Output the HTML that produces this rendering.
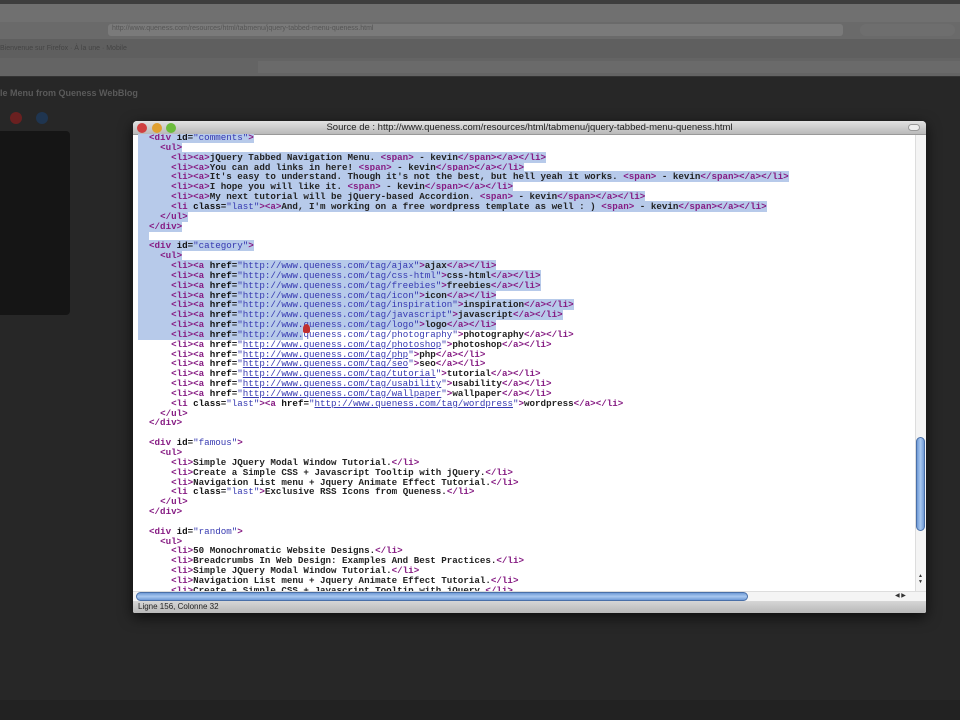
<!DOCTYPE html>
<html><head><meta charset="utf-8"><style>
*{margin:0;padding:0;box-sizing:border-box}
body{width:960px;height:720px;overflow:hidden;background:#272727;font-family:"Liberation Sans",sans-serif;position:relative}
.abs{position:absolute}
.chrome{left:0;top:0;width:960px;height:77px;background:#666}
.win{left:133px;top:121px;width:793px;height:492px;background:#fff;border-radius:4px 4px 2px 2px;box-shadow:0 4px 14px rgba(0,0,0,.7);overflow:hidden}
.title{left:0;top:0;width:793px;height:14px;background:linear-gradient(#e2e2e2,#b9b9b9);font-size:9.5px;color:#222;text-align:center;line-height:14px;border-bottom:1px solid #999}
.dot{top:2px;width:10px;height:10px;border-radius:50%}
.code{left:5px;top:13px;width:778px;height:457px;overflow:hidden}
pre{font-family:"Liberation Mono",monospace;font-size:9.2px;line-height:9.85px;color:#222;font-weight:bold;margin-top:-1px}
.t{color:#861c83}.a{color:#111}.v{color:#3538b0;font-weight:normal}
.u{text-decoration:underline}
.s{background:#b7caea}
</style></head><body>
<div class="abs chrome">
 <div class="abs" style="left:0;top:0;width:960px;height:4px;background:#3e3e3e"></div>
 <div class="abs" style="left:0;top:4px;width:960px;height:18px;background:#707070"></div>
 <div class="abs" style="left:0;top:22px;width:960px;height:17px;background:#6a6a6a"></div>
 <div class="abs" style="left:108px;top:24px;width:735px;height:12px;background:#7a7a7a;border-radius:3px"></div>
 <div class="abs" style="left:112px;top:25px;font-size:7px;color:#555">http://www.queness.com/resources/html/tabmenu/jquery-tabbed-menu-queness.html</div>
 <div class="abs" style="left:860px;top:24px;width:95px;height:12px;background:#6e6e6e;border-radius:6px"></div>
 <div class="abs" style="left:0;top:39px;width:960px;height:19px;background:#5f5f5f"></div>
 <div class="abs" style="left:0;top:45px;font-size:7px;color:#444">Bienvenue sur Firefox · À la une · Mobile</div>
 <div class="abs" style="left:0;top:58px;width:960px;height:18px;background:#646464"></div>
 <div class="abs" style="left:258px;top:61px;width:702px;height:12px;background:#6a6a6a"></div>
 <div class="abs" style="left:0;top:76px;width:960px;height:1px;background:#333"></div>
</div>
<div class="abs" style="left:0;top:88px;font-size:9px;color:#5a5a5a;font-weight:bold">le Menu from Queness WebBlog</div>
<div class="abs" style="left:10px;top:112px;width:12px;height:12px;border-radius:50%;background:#6a2020"></div>
<div class="abs" style="left:36px;top:112px;width:12px;height:12px;border-radius:50%;background:#1f3550"></div>
<div class="abs" style="left:0;top:131px;width:70px;height:184px;background:#151515;border-radius:0 4px 4px 0"></div>
<div class="abs" style="left:0;top:700px;width:960px;height:20px;background:#222"></div>

<div class="abs win">
 <div class="abs title">Source de : http://www.queness.com/resources/html/tabmenu/jquery-tabbed-menu-queness.html</div>
 <div class="abs dot" style="left:4px;background:#d04040"></div>
 <div class="abs dot" style="left:19px;background:#e0a030"></div>
 <div class="abs dot" style="left:33px;background:#6cbc3c"></div>
 <div class="abs" style="right:6px;top:3px;width:12px;height:7px;background:#eee;border-radius:4px;border:1px solid #999"></div>
 <div class="abs code"><pre><span class="s">  <span class="t">&lt;div</span> <span class="a">id</span>=<span class="v">"comments"</span><span class="t">&gt;</span>
    <span class="t">&lt;ul&gt;</span>
      <span class="t">&lt;li&gt;&lt;a&gt;</span>jQuery Tabbed Navigation Menu. <span class="t">&lt;span&gt;</span> - kevin<span class="t">&lt;/span&gt;&lt;/a&gt;&lt;/li&gt;</span>
      <span class="t">&lt;li&gt;&lt;a&gt;</span>You can add links in here! <span class="t">&lt;span&gt;</span> - kevin<span class="t">&lt;/span&gt;&lt;/a&gt;&lt;/li&gt;</span>
      <span class="t">&lt;li&gt;&lt;a&gt;</span>It's easy to understand. Though it's not the best, but hell yeah it works. <span class="t">&lt;span&gt;</span> - kevin<span class="t">&lt;/span&gt;&lt;/a&gt;&lt;/li&gt;</span>
      <span class="t">&lt;li&gt;&lt;a&gt;</span>I hope you will like it. <span class="t">&lt;span&gt;</span> - kevin<span class="t">&lt;/span&gt;&lt;/a&gt;&lt;/li&gt;</span>
      <span class="t">&lt;li&gt;&lt;a&gt;</span>My next tutorial will be jQuery-based Accordion. <span class="t">&lt;span&gt;</span> - kevin<span class="t">&lt;/span&gt;&lt;/a&gt;&lt;/li&gt;</span>
      <span class="t">&lt;li</span> <span class="a">class</span>=<span class="v">"last"</span><span class="t">&gt;&lt;a&gt;</span>And, I'm working on a free wordpress template as well : ) <span class="t">&lt;span&gt;</span> - kevin<span class="t">&lt;/span&gt;&lt;/a&gt;&lt;/li&gt;</span>
    <span class="t">&lt;/ul&gt;</span>
  <span class="t">&lt;/div&gt;</span>
  
  <span class="t">&lt;div</span> <span class="a">id</span>=<span class="v">"category"</span><span class="t">&gt;</span>
    <span class="t">&lt;ul&gt;</span>
      <span class="t">&lt;li&gt;&lt;a</span> <span class="a">href</span>=<span class="v">"http://www.queness.com/tag/ajax"</span><span class="t">&gt;</span>ajax<span class="t">&lt;/a&gt;&lt;/li&gt;</span>
      <span class="t">&lt;li&gt;&lt;a</span> <span class="a">href</span>=<span class="v">"http://www.queness.com/tag/css-html"</span><span class="t">&gt;</span>css-html<span class="t">&lt;/a&gt;&lt;/li&gt;</span>
      <span class="t">&lt;li&gt;&lt;a</span> <span class="a">href</span>=<span class="v">"http://www.queness.com/tag/freebies"</span><span class="t">&gt;</span>freebies<span class="t">&lt;/a&gt;&lt;/li&gt;</span>
      <span class="t">&lt;li&gt;&lt;a</span> <span class="a">href</span>=<span class="v">"http://www.queness.com/tag/icon"</span><span class="t">&gt;</span>icon<span class="t">&lt;/a&gt;&lt;/li&gt;</span>
      <span class="t">&lt;li&gt;&lt;a</span> <span class="a">href</span>=<span class="v">"http://www.queness.com/tag/inspiration"</span><span class="t">&gt;</span>inspiration<span class="t">&lt;/a&gt;&lt;/li&gt;</span>
      <span class="t">&lt;li&gt;&lt;a</span> <span class="a">href</span>=<span class="v">"http://www.queness.com/tag/javascript"</span><span class="t">&gt;</span>javascript<span class="t">&lt;/a&gt;&lt;/li&gt;</span>
      <span class="t">&lt;li&gt;&lt;a</span> <span class="a">href</span>=<span class="v">"http://www.queness.com/tag/logo"</span><span class="t">&gt;</span>logo<span class="t">&lt;/a&gt;&lt;/li&gt;</span>
      <span class="t">&lt;li&gt;&lt;a</span> <span class="a">href</span>=<span class="v">"http://www.</span></span><span class="v">queness.com/tag/photography"</span><span class="t">&gt;</span>photography<span class="t">&lt;/a&gt;&lt;/li&gt;</span>
      <span class="t">&lt;li&gt;&lt;a</span> <span class="a">href</span>=<span class="v">"<span class="u">http://www.queness.com/tag/photoshop</span>"</span><span class="t">&gt;</span>photoshop<span class="t">&lt;/a&gt;&lt;/li&gt;</span>
      <span class="t">&lt;li&gt;&lt;a</span> <span class="a">href</span>=<span class="v">"<span class="u">http://www.queness.com/tag/php</span>"</span><span class="t">&gt;</span>php<span class="t">&lt;/a&gt;&lt;/li&gt;</span>
      <span class="t">&lt;li&gt;&lt;a</span> <span class="a">href</span>=<span class="v">"<span class="u">http://www.queness.com/tag/seo</span>"</span><span class="t">&gt;</span>seo<span class="t">&lt;/a&gt;&lt;/li&gt;</span>
      <span class="t">&lt;li&gt;&lt;a</span> <span class="a">href</span>=<span class="v">"<span class="u">http://www.queness.com/tag/tutorial</span>"</span><span class="t">&gt;</span>tutorial<span class="t">&lt;/a&gt;&lt;/li&gt;</span>
      <span class="t">&lt;li&gt;&lt;a</span> <span class="a">href</span>=<span class="v">"<span class="u">http://www.queness.com/tag/usability</span>"</span><span class="t">&gt;</span>usability<span class="t">&lt;/a&gt;&lt;/li&gt;</span>
      <span class="t">&lt;li&gt;&lt;a</span> <span class="a">href</span>=<span class="v">"<span class="u">http://www.queness.com/tag/wallpaper</span>"</span><span class="t">&gt;</span>wallpaper<span class="t">&lt;/a&gt;&lt;/li&gt;</span>
      <span class="t">&lt;li</span> <span class="a">class</span>=<span class="v">"last"</span><span class="t">&gt;&lt;a</span> <span class="a">href</span>=<span class="v">"<span class="u">http://www.queness.com/tag/wordpress</span>"</span><span class="t">&gt;</span>wordpress<span class="t">&lt;/a&gt;&lt;/li&gt;</span>
    <span class="t">&lt;/ul&gt;</span>
  <span class="t">&lt;/div&gt;</span>

  <span class="t">&lt;div</span> <span class="a">id</span>=<span class="v">"famous"</span><span class="t">&gt;</span>
    <span class="t">&lt;ul&gt;</span>
      <span class="t">&lt;li&gt;</span>Simple JQuery Modal Window Tutorial.<span class="t">&lt;/li&gt;</span>
      <span class="t">&lt;li&gt;</span>Create a Simple CSS + Javascript Tooltip with jQuery.<span class="t">&lt;/li&gt;</span>
      <span class="t">&lt;li&gt;</span>Navigation List menu + Jquery Animate Effect Tutorial.<span class="t">&lt;/li&gt;</span>
      <span class="t">&lt;li</span> <span class="a">class</span>=<span class="v">"last"</span><span class="t">&gt;</span>Exclusive RSS Icons from Queness.<span class="t">&lt;/li&gt;</span>
    <span class="t">&lt;/ul&gt;</span>
  <span class="t">&lt;/div&gt;</span>

  <span class="t">&lt;div</span> <span class="a">id</span>=<span class="v">"random"</span><span class="t">&gt;</span>
    <span class="t">&lt;ul&gt;</span>
      <span class="t">&lt;li&gt;</span>50 Monochromatic Website Designs.<span class="t">&lt;/li&gt;</span>
      <span class="t">&lt;li&gt;</span>Breadcrumbs In Web Design: Examples And Best Practices.<span class="t">&lt;/li&gt;</span>
      <span class="t">&lt;li&gt;</span>Simple JQuery Modal Window Tutorial.<span class="t">&lt;/li&gt;</span>
      <span class="t">&lt;li&gt;</span>Navigation List menu + Jquery Animate Effect Tutorial.<span class="t">&lt;/li&gt;</span>
      <span class="t">&lt;li&gt;</span>Create a Simple CSS + Javascript Tooltip with jQuery.<span class="t">&lt;/li&gt;</span>
</pre></div>
 <div class="abs" style="left:170px;top:203px;width:7px;height:9px;background:#c03030;border-radius:50% 50% 2px 2px"></div>
 <!-- vertical scrollbar -->
 <div class="abs" style="left:782px;top:14px;width:11px;height:456px;background:#f4f4f4;border-left:1px solid #ddd"></div>
 <div class="abs" style="left:783px;top:316px;width:9px;height:94px;background:linear-gradient(90deg,#6f9ad6,#a9c8f0,#6f9ad6);border-radius:5px;border:1px solid #4a70a8"></div>
 <div class="abs" style="left:785px;top:452px;font-size:5px;color:#333">▲<br>▼</div>
 <!-- horizontal scrollbar -->
 <div class="abs" style="left:0;top:470px;width:793px;height:10px;background:#f4f4f4;border-top:1px solid #ddd"></div>
 <div class="abs" style="left:3px;top:471px;width:612px;height:9px;background:linear-gradient(#6f9ad6,#a9c8f0,#6f9ad6);border-radius:5px;border:1px solid #4a70a8"></div>
 <div class="abs" style="left:762px;top:471px;font-size:6px;color:#333">◀ ▶</div>
 <!-- status -->
 <div class="abs" style="left:0;top:480px;width:793px;height:12px;background:linear-gradient(#d6d6d6,#b8b8b8);font-size:8px;line-height:12px;padding-left:5px;color:#222">Ligne 156, Colonne 32</div>
</div>
</body></html>
